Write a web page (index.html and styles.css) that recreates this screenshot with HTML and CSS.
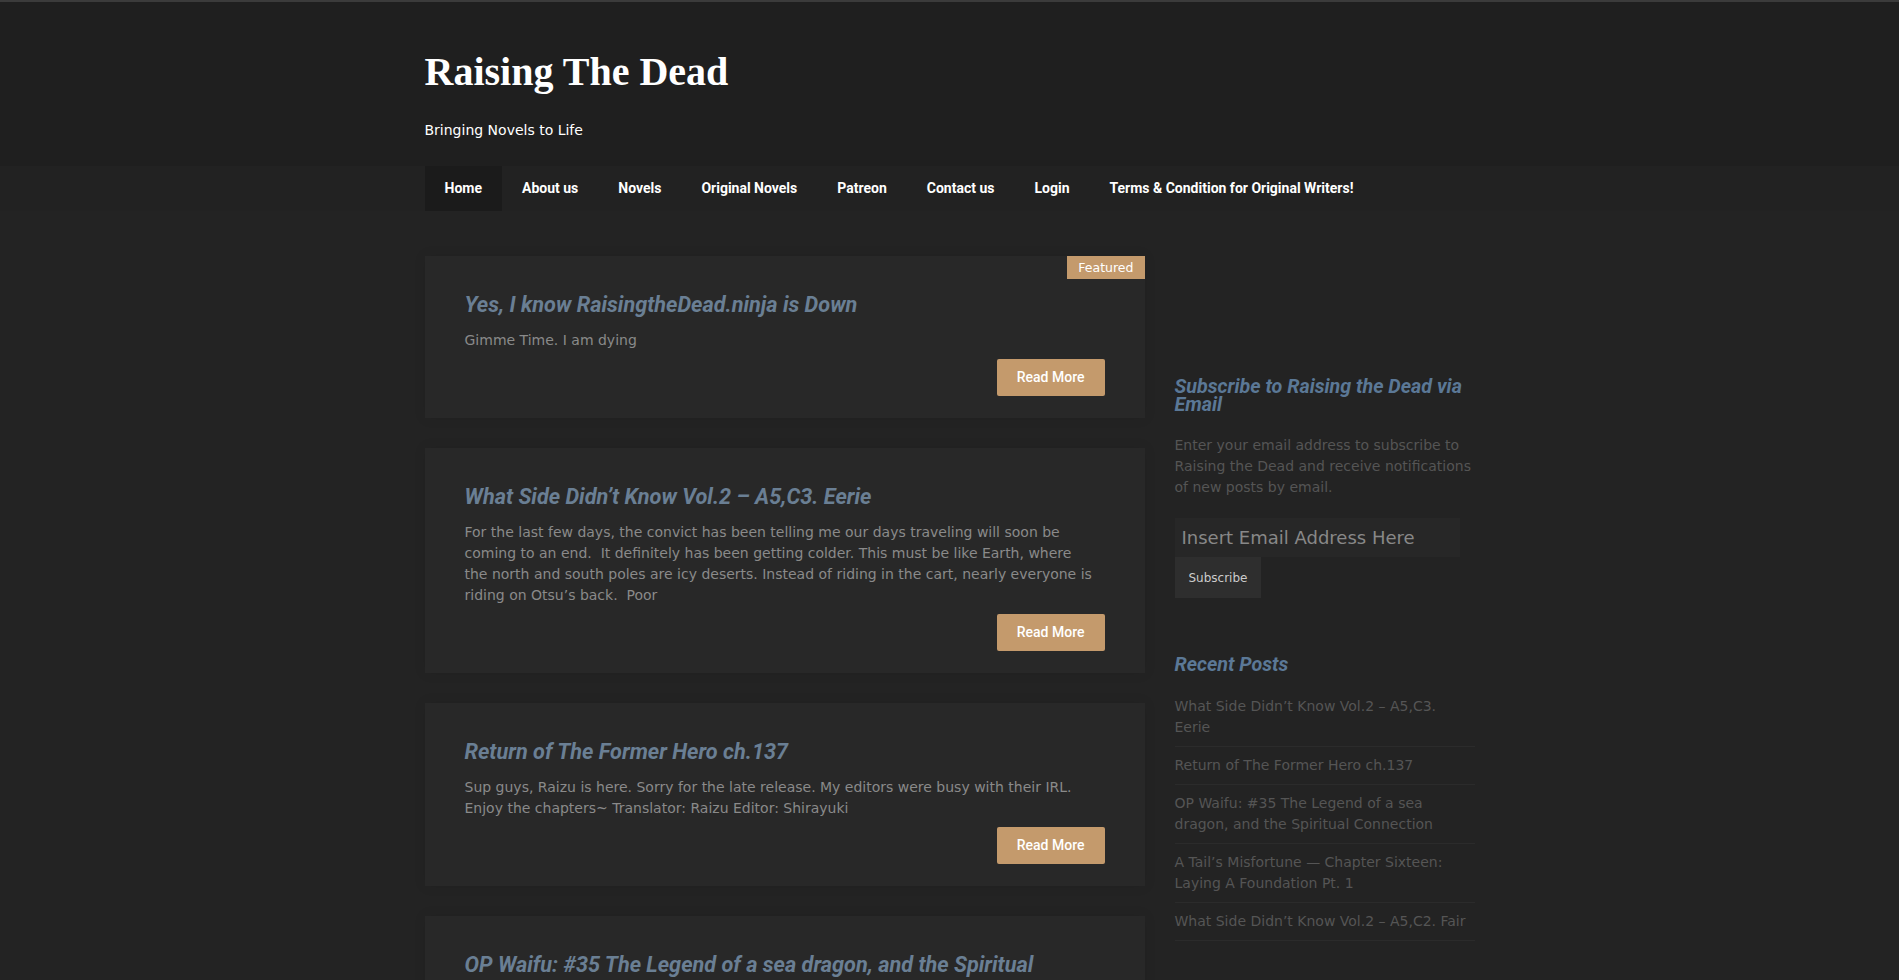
FILE: index.html
```html
<!DOCTYPE html>
<html lang="en">
<head>
<meta charset="utf-8">
<title>Raising The Dead – Bringing Novels to Life</title>
<link rel="stylesheet" href="styles.css">
</head>
<body>
<header class="site-header">
  <div class="container">
    <h1 class="site-title">Raising The Dead</h1>
    <p class="site-desc">Bringing Novels to Life</p>
  </div>
</header>
<nav class="main-nav">
  <div class="container">
    <ul class="menu">
      <li class="current"><a href="#">Home</a></li>
      <li><a href="#">About us</a></li>
      <li><a href="#">Novels</a></li>
      <li><a href="#">Original Novels</a></li>
      <li><a href="#">Patreon</a></li>
      <li><a href="#">Contact us</a></li>
      <li><a href="#">Login</a></li>
      <li><a href="#">Terms &amp; Condition for Original Writers!</a></li>
    </ul>
  </div>
</nav>
<div class="container site-main">
  <main class="content">
    <article class="post">
      <span class="badge">Featured</span>
      <h2 class="post-title">Yes, I know RaisingtheDead.ninja is Down</h2>
      <p class="excerpt">Gimme Time. I am dying</p>
      <div class="more"><a class="btn-more" href="#">Read More</a></div>
    </article>
    <article class="post">
      <h2 class="post-title">What Side Didn’t Know Vol.2 – A5,C3. Eerie</h2>
      <p class="excerpt">For the last few days, the convict has been telling me our days traveling will soon be coming to an end.&nbsp; It definitely has been getting colder. This must be like Earth, where the north and south poles are icy deserts. Instead of riding in the cart, nearly everyone is riding on Otsu’s back.&nbsp; Poor</p>
      <div class="more"><a class="btn-more" href="#">Read More</a></div>
    </article>
    <article class="post">
      <h2 class="post-title">Return of The Former Hero ch.137</h2>
      <p class="excerpt">Sup guys, Raizu is here. Sorry for the late release. My editors were busy with their IRL. Enjoy the chapters~ Translator: Raizu Editor: Shirayuki</p>
      <div class="more"><a class="btn-more" href="#">Read More</a></div>
    </article>
    <article class="post">
      <h2 class="post-title">OP Waifu: #35 The Legend of a sea dragon, and the Spiritual Connection</h2>
      <p class="excerpt">Translator: Raizu Editor: Shirayuki</p>
      <div class="more"><a class="btn-more" href="#">Read More</a></div>
    </article>
  </main>
  <aside class="sidebar">
    <div class="widget widget-empty"></div>
    <section class="widget">
      <h3 class="widget-title">Subscribe to Raising the Dead via Email</h3>
      <p class="widget-text">Enter your email address to subscribe to Raising the Dead and receive notifications of new posts by email.</p>
      <form class="subscribe">
        <input class="email" type="email" placeholder="Insert Email Address Here">
        <button class="btn-sub" type="button">Subscribe</button>
      </form>
    </section>
    <section class="widget">
      <h3 class="widget-title recent-title">Recent Posts</h3>
      <ul class="recent">
        <li><a href="#">What Side Didn’t Know Vol.2 – A5,C3. Eerie</a></li>
        <li><a href="#">Return of The Former Hero ch.137</a></li>
        <li><a href="#">OP Waifu: #35 The Legend of a sea dragon, and the Spiritual Connection</a></li>
        <li><a href="#">A Tail’s Misfortune — Chapter Sixteen: Laying A Foundation Pt. 1</a></li>
        <li><a href="#">What Side Didn’t Know Vol.2 – A5,C2. Fair</a></li>
      </ul>
    </section>
  </aside>
</div>
</body>
</html>
```
FILE: styles.css
```css
html, body {
  margin: 0;
  padding: 0;
}
body {
  background: #232323;
  color: #8a8a8a;
  font-family: "DejaVu Sans", Verdana, sans-serif;
  font-size: 14px;
}
a {
  text-decoration: none;
  color: inherit;
}
.container {
  width: 1050px;
  margin: 0 auto;
}
.site-header {
  background: #1f1f1f;
  border-top: 2px solid #3b3b3b;
  padding: 47px 0 26px;
}
.site-title {
  margin: 0;
  font-family: "Liberation Serif", "Times New Roman", serif;
  font-weight: 700;
  font-size: 40px;
  line-height: 46px;
  color: #ffffff;
}
.site-desc {
  margin: 25px 0 0;
  font-size: 14px;
  line-height: 20px;
  color: #ffffff;
}
.main-nav {
  background: #222222;
}
.menu {
  list-style: none;
  margin: 0;
  padding: 0;
  display: flex;
}
.menu a {
  display: block;
  padding: 0 20px;
  line-height: 45px;
  font-family: Roboto, "Liberation Sans", sans-serif;
  font-weight: 700;
  font-size: 14px;
  color: #ffffff;
}
.menu .current a {
  background: #1b1b1b;
}
.site-main {
  display: flex;
  gap: 30px;
  padding-top: 45px;
  align-items: flex-start;
}
.content {
  width: 720px;
  flex: none;
}
.post {
  position: relative;
  background: #282828;
  padding: 34px 40px 22px;
  margin-bottom: 30px;
  box-shadow: 0 0 12px rgba(0, 0, 0, 0.08);
}
.badge {
  position: absolute;
  top: 0;
  right: 0;
  background: #c49a6c;
  color: #ffffff;
  font-size: 12.5px;
  line-height: 23px;
  padding: 0 11px;
}
.post-title {
  margin: 0;
  font-family: Roboto, "Liberation Sans", sans-serif;
  font-style: italic;
  font-weight: 700;
  font-size: 21.7px;
  line-height: 30px;
  color: #6a7f94;
}
.excerpt {
  margin: 10px 6px 0 0;
  font-size: 14px;
  line-height: 21px;
  color: #8a8a8a;
}
.more {
  display: flex;
  justify-content: flex-end;
  margin-top: 8px;
}
.btn-more {
  display: block;
  background: #c49a6c;
  color: #ffffff;
  font-family: Roboto, "Liberation Sans", sans-serif;
  font-weight: 500;
  font-size: 14px;
  line-height: 37px;
  padding: 0 20px;
  border-radius: 2px;
}
.sidebar {
  width: 300px;
  flex: none;
  color: #555555;
  font-size: 14px;
}
.widget {
  margin-bottom: 58px;
}
.widget-empty {
  height: 64px;
}
.widget-title {
  margin: 0 0 14px;
  font-family: Roboto, "Liberation Sans", sans-serif;
  font-style: italic;
  font-weight: 700;
  font-size: 19.7px;
  line-height: 18px;
  color: #5b7896;
}
.widget-text {
  margin: 21px 0 0;
  line-height: 21px;
}
.subscribe {
  margin-top: 20px;
}
.email {
  display: block;
  box-sizing: border-box;
  width: 285px;
  height: 39px;
  margin: 0;
  border: 0;
  outline: none;
  background: #272727;
  color: #888888;
  padding: 0 7px;
  font-family: "DejaVu Sans", Verdana, sans-serif;
  font-size: 18px;
}
.email::placeholder {
  color: #888888;
}
.btn-sub {
  display: block;
  height: 41px;
  margin: 0;
  border: 0;
  padding: 0 14px;
  background: #2e2e2e;
  color: #cccccc;
  font-family: "DejaVu Sans", Verdana, sans-serif;
  font-size: 12px;
}
.recent {
  list-style: none;
  margin: 0;
  padding: 0;
}
.recent li {
  padding: 8px 0;
  line-height: 21px;
  border-bottom: 1px solid #2b2b2b;
}
.recent a {
  color: #555555;
}
```
